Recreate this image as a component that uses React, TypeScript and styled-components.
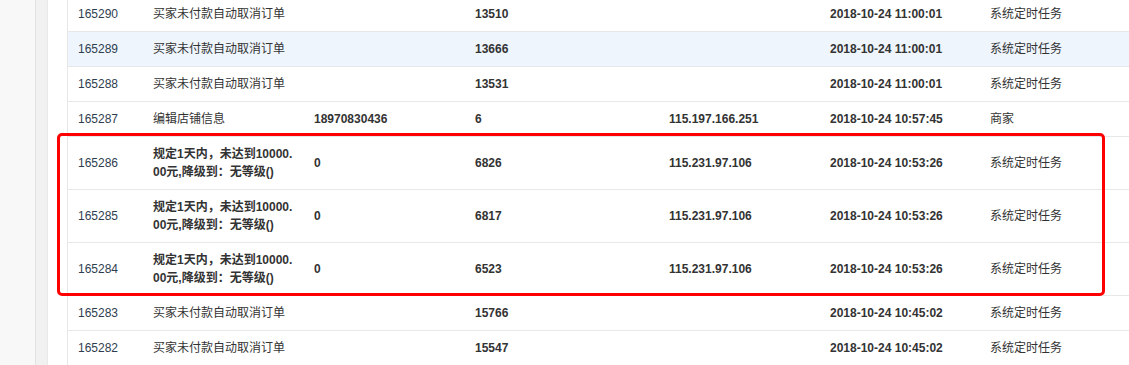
import React from "react";
import styled, { createGlobalStyle } from "styled-components";

const Global = createGlobalStyle`
  html, body { margin: 0; padding: 0; background: #fff; }
  body {
    width: 1129px;
    height: 365px;
    overflow: hidden;
    font-family: "Liberation Sans", Arial, "Noto Sans CJK SC", sans-serif;
    font-size: 12px;
    color: #333;
  }
`;

const Page = styled.div`
  display: flex;
  height: 365px;
  overflow: hidden;
`;

const Sidebar = styled.div`
  width: 35px;
  flex: none;
  background: #f8f8f8;
  border-right: 1px solid #e2e2e2;
`;

const Gutter = styled.div`
  width: 11px;
  flex: none;
  background: #f1f1f1;
  border-right: 1px solid #e9e9e9;
`;

const Main = styled.div`
  flex: 1;
  min-width: 0;
  padding-left: 19px;
  background: #fff;
`;

const Table = styled.div`
  margin-top: -3px;
  border-left: 1px solid #e7e7e7;
`;

const Row = styled.div<{ $hl?: boolean }>`
  display: grid;
  grid-template-columns: 75px 161px 161px 194px 161px 160px 1fr;
  align-items: center;
  border-bottom: 1px solid #e8e8e8;
  background: ${(p) => (p.$hl ? "#eef5fd" : "#fff")};
`;

const Cell = styled.div<{ $bold?: boolean; $id?: boolean }>`
  padding: 8px 10px;
  line-height: 18px;
  white-space: nowrap;
  font-weight: ${(p) => (p.$bold ? "bold" : "normal")};
  color: ${(p) => (p.$id ? "#2f3e4f" : "#333")};
`;

const Marked = styled.div`
  position: relative;
  &::after {
    content: "";
    position: absolute;
    top: -4px;
    bottom: 0;
    left: -11px;
    width: 1048px;
    border: 3px solid #ff0000;
    border-radius: 5px;
    box-sizing: border-box;
    pointer-events: none;
  }
`;

type R = {
  id: string;
  desc: string;
  wrap?: [string, string];
  phone: string;
  num: string;
  ip: string;
  time: string;
  op: string;
  hl?: boolean;
};

const top: R[] = [
  { id: "165290", desc: "买家未付款自动取消订单", phone: "", num: "13510", ip: "", time: "2018-10-24 11:00:01", op: "系统定时任务" },
  { id: "165289", desc: "买家未付款自动取消订单", phone: "", num: "13666", ip: "", time: "2018-10-24 11:00:01", op: "系统定时任务", hl: true },
  { id: "165288", desc: "买家未付款自动取消订单", phone: "", num: "13531", ip: "", time: "2018-10-24 11:00:01", op: "系统定时任务" },
  { id: "165287", desc: "编辑店铺信息", phone: "18970830436", num: "6", ip: "115.197.166.251", time: "2018-10-24 10:57:45", op: "商家" },
];

const wrapText: [string, string] = ["规定1天内，未达到10000.", "00元,降级到：无等级()"];

const marked: R[] = [
  { id: "165286", desc: "", wrap: wrapText, phone: "0", num: "6826", ip: "115.231.97.106", time: "2018-10-24 10:53:26", op: "系统定时任务" },
  { id: "165285", desc: "", wrap: wrapText, phone: "0", num: "6817", ip: "115.231.97.106", time: "2018-10-24 10:53:26", op: "系统定时任务" },
  { id: "165284", desc: "", wrap: wrapText, phone: "0", num: "6523", ip: "115.231.97.106", time: "2018-10-24 10:53:26", op: "系统定时任务" },
];

const bottom: R[] = [
  { id: "165283", desc: "买家未付款自动取消订单", phone: "", num: "15766", ip: "", time: "2018-10-24 10:45:02", op: "系统定时任务" },
  { id: "165282", desc: "买家未付款自动取消订单", phone: "", num: "15547", ip: "", time: "2018-10-24 10:45:02", op: "系统定时任务" },
];

const LogRow = ({ r }: { r: R }) => (
  <Row $hl={r.hl}>
    <Cell $id>{r.id}</Cell>
    {r.wrap ? (
      <Cell $bold>
        {r.wrap[0]}
        <br />
        {r.wrap[1]}
      </Cell>
    ) : (
      <Cell>{r.desc}</Cell>
    )}
    <Cell $bold>{r.phone}</Cell>
    <Cell $bold>{r.num}</Cell>
    <Cell $bold>{r.ip}</Cell>
    <Cell $bold>{r.time}</Cell>
    <Cell>{r.op}</Cell>
  </Row>
);

export default function App() {
  return (
    <>
      <Global />
      <Page>
        <Sidebar />
        <Gutter />
        <Main>
          <Table>
            {top.map((r) => (
              <LogRow key={r.id} r={r} />
            ))}
            <Marked>
              {marked.map((r) => (
                <LogRow key={r.id} r={r} />
              ))}
            </Marked>
            {bottom.map((r) => (
              <LogRow key={r.id} r={r} />
            ))}
          </Table>
        </Main>
      </Page>
    </>
  );
}
